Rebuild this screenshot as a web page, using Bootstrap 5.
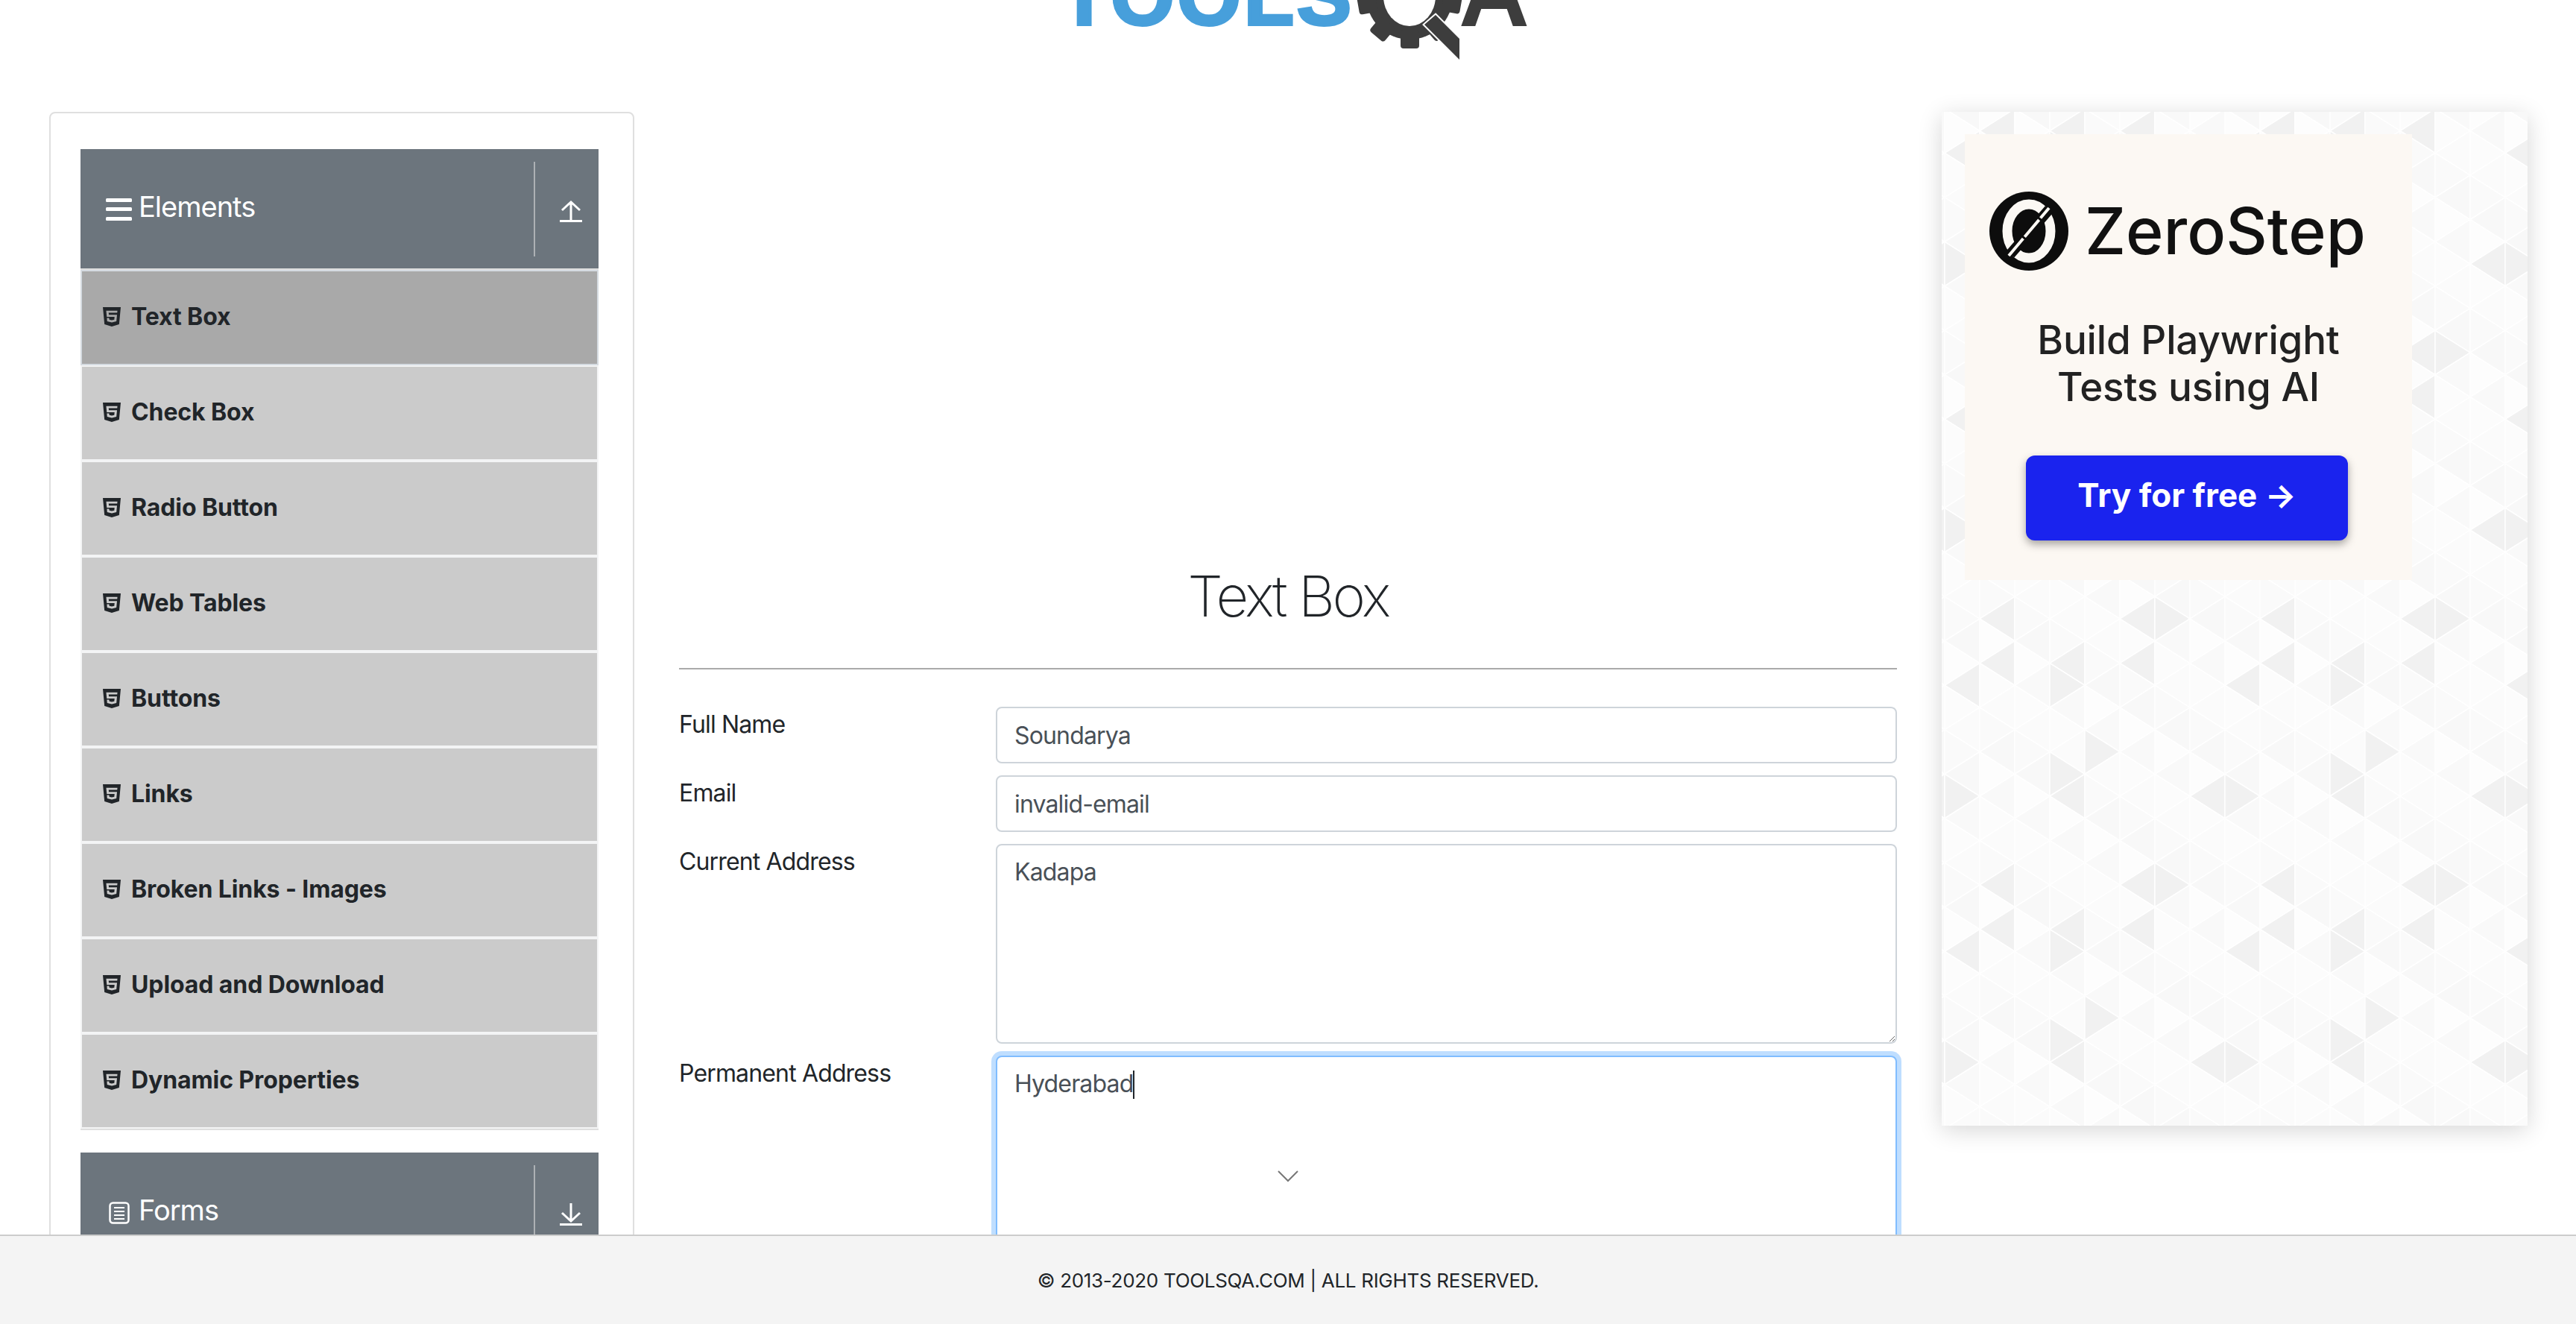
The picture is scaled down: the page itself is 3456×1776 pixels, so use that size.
<!DOCTYPE html>
<html lang="en">
<head>
  <meta charset="UTF-8">
  <title>ToolsQA</title>
  <link href="https://cdn.jsdelivr.net/npm/bootstrap@5.3.0/dist/css/bootstrap.min.css" rel="stylesheet">
  <style>
    body {
      font-family: Inter, "Liberation Sans", sans-serif;
      color: #212529;
      overflow: hidden;
      height: 1776px;
    }
    .logo-bar { height: 150px; }
    .page-wrap { padding: 0 65px 0 66px; gap: 60px; }

    /* sidebar */
    .side-col { width: 785px; flex: none; }
    .side-card { border: 2px solid #dfdfdf; border-radius: 8px; padding: 48px 46px 0 40px; }
    .group-head { height: 160px; font-size: 38px; letter-spacing: -1px; }
    .head-label { padding-left: 34px; gap: 9px; margin-top: -6px; }
    .head-label.forms-label { gap: 12px; }
    .head-sep { width: 2px; height: 127px; background: #adb1b5; }
    .head-arrow { width: 85px; padding: 8px 0 0 11px; }
    .menu-list { border-radius: 0; margin-bottom: 30px; }
    .menu-list .list-group-item {
      height: 128px;
      border: 2px solid #f3f4f5;
      border-radius: 0;
      background: #cbcbcb;
      color: #212529;
      font-size: 32px;
      font-weight: 700;
      letter-spacing: -.1px;
      padding: 0 0 3px 28px;
      gap: 14px;
    }
    .menu-list .list-group-item.active { background: #a9a9a9; border-color: #d5dbe1; }

    /* form */
    .main-col { min-width: 0; }
    .page-title {
      font-size: 76px;
      font-weight: 200;
      line-height: 1.2;
      letter-spacing: -3.4px;
      margin: 0;
      padding-top: 604px;
    }
    .title-rule { border: 0; border-top: 2px solid #aaa; opacity: 1; margin: 51px 0 50px; }
    .field-label { width: 425px; flex: none; font-size: 32px; line-height: 48px; letter-spacing: -.85px; margin: 0; }
    .field-box {
      height: 76px;
      font-size: 32px;
      line-height: 48px;
      letter-spacing: -.85px;
      color: #495057;
      border: 2px solid #ced4da;
      border-radius: 8px;
      padding: 12px 23px;
    }
    .field-box.tall { height: 268px; }
    .field-box.focused { border-color: #80bdff; box-shadow: 0 0 0 6px rgba(0, 123, 255, .25); }
    .type-caret { display: inline-block; width: 2px; height: 38px; background: #212529; vertical-align: -9px; }
    .scroll-chevron { top: 1420px; left: 50%; margin-left: -14px; }

    /* ad */
    .ad-col { width: 786px; height: 1360px; flex: none; background: #fafafa; background-position: 51px -34px; box-shadow: 0 6px 30px rgba(0, 0, 0, .16); padding: 30px 0 0 31px; }
    .ad-panel { width: 600px; height: 598px; background: #fcf8f3; padding-top: 77px; }
    .ad-brand { gap: 22px; padding-left: 33px; height: 106px; font-size: 86px; font-weight: 500; color: #111; }
    .ad-copy { font-size: 53px; line-height: 63px; font-weight: 500; color: #222; letter-spacing: -.2px; margin: 62px 0 0; }
    .try-btn {
      display: block;
      width: 432px;
      height: 114px;
      margin: 60px auto 0;
      padding: 0 0 8px;
      font-size: 44px;
      font-weight: 700;
      border: 0;
      border-radius: 12px;
      background: #1a23ee;
      box-shadow: 0 5px 12px rgba(0, 0, 0, .35);
      transform: translateX(-2px);
    }

    .site-footer { height: 120px; background: #f4f4f4; border-top: 2px solid #ccc; font-size: 26px; letter-spacing: -.3px; color: #212529; }
  </style>
</head>
<body>
  <svg width="0" height="0" class="d-block">
    <defs>
      <symbol id="html5" viewBox="0 32 384 448" preserveAspectRatio="none">
        <path fill="#212529" d="M0 32l34.9 395.8L191.5 480l157.6-52.2L384 32H0zm308.2 127.9H124.4l4.1 49.4h175.6l-13.6 148.4-97.9 27v.3h-1.1l-98.7-27.3-6-75.8h47.7L138 320l53.5 14.5 53.7-14.5 6-62.2H84.3L71.5 112.2h241.1l-4.4 47.7z"/>
      </symbol>
      <symbol id="arrowUp" viewBox="0 0 30 32">
        <path d="M15 28V3M3 14L15 3l12 11" fill="none" stroke="#fff" stroke-width="3"/>
        <rect y="27" width="30" height="3" fill="#fff"/>
      </symbol>
      <symbol id="arrowDown" viewBox="0 0 30 32">
        <path d="M15 0V24M3 13l12 11 12-11" fill="none" stroke="#fff" stroke-width="3"/>
        <rect y="27" width="30" height="3" fill="#fff"/>
      </symbol>
    </defs>
  </svg>

  <header class="logo-bar d-flex justify-content-center">
    <svg width="660" height="90" viewBox="1398 0 660 90">
      <text x="1421" y="33" font-family="Liberation Sans" font-weight="700" font-size="110" fill="#479fdb" stroke="#479fdb" stroke-width="4" textLength="392" lengthAdjust="spacing">TOOLS</text>
      <g fill="#3d3d3d">
        <text x="1957" y="35" font-family="Liberation Sans" font-weight="700" font-size="130" textLength="95" lengthAdjust="spacingAndGlyphs">A</text>
        <circle cx="1891" cy="-5" r="58"/>
        <rect x="1879" y="40" width="25" height="25" rx="4" transform="rotate(0 1891 -5)"/>
        <rect x="1879" y="40" width="25" height="25" rx="4" transform="rotate(40 1891 -5)"/>
        <rect x="1879" y="40" width="25" height="25" rx="4" transform="rotate(80 1891 -5)"/>
        <rect x="1879" y="40" width="25" height="25" rx="4" transform="rotate(-40 1891 -5)"/>
        <rect x="1879" y="40" width="25" height="25" rx="4" transform="rotate(-80 1891 -5)"/>
      </g>
      <ellipse cx="1891" cy="-5" rx="35" ry="40" fill="#fff"/>
      <polygon points="1926,20 1958,52 1958,80 1911,33" fill="#3d3d3d" stroke="#fff" stroke-width="4" paint-order="stroke"/>
    </svg>
  </header>

  <div class="page-wrap d-flex align-items-start">
    <aside class="side-col">
      <div class="card side-card">
        <div class="group-head bg-secondary text-white d-flex align-items-center">
          <div class="head-label flex-fill d-flex align-items-center">
            <svg width="35" height="30" viewBox="0 0 35 30" class="mt-2"><g fill="#fff"><rect width="35" height="5" rx="1.5"/><rect y="12" width="35" height="5" rx="1.5"/><rect y="25" width="35" height="5" rx="1.5"/></g></svg>
            <span>Elements</span>
          </div>
          <div class="head-sep"></div>
          <div class="head-arrow d-flex justify-content-center"><svg width="30" height="32"><use href="#arrowUp"/></svg></div>
        </div>
        <div class="list-group menu-list" id="menuList"></div>

        <div class="group-head bg-secondary text-white d-flex align-items-center">
          <div class="head-label forms-label flex-fill d-flex align-items-center">
            <svg width="28" height="30" viewBox="0 0 28 30" class="mt-2 ms-1"><rect x="1.5" y="1.5" width="25" height="27" rx="4" fill="none" stroke="#fff" stroke-width="2.5"/><path d="M7 8h14M7 13h14M7 18h14M7 23h14" stroke="#fff" stroke-width="2"/></svg>
            <span>Forms</span>
          </div>
          <div class="head-sep"></div>
          <div class="head-arrow d-flex justify-content-center"><svg width="30" height="32"><use href="#arrowDown"/></svg></div>
        </div>
      </div>
    </aside>

    <main class="main-col flex-fill position-relative">
      <h1 class="page-title text-center">Text Box</h1>
      <hr class="title-rule">
      <form>
        <div class="d-flex mb-3">
          <label class="field-label" for="fullName">Full Name</label>
          <input class="form-control field-box" id="fullName" type="text" value="Soundarya">
        </div>
        <div class="d-flex mb-3">
          <label class="field-label" for="email">Email</label>
          <input class="form-control field-box" id="email" type="text" value="invalid-email">
        </div>
        <div class="d-flex mb-3">
          <label class="field-label" for="currentAddress">Current Address</label>
          <textarea class="form-control field-box tall" id="currentAddress">Kadapa</textarea>
        </div>
        <div class="d-flex mb-3">
          <label class="field-label">Permanent Address</label>
          <div class="form-control field-box tall focused">Hyderabad<span class="type-caret"></span></div>
        </div>
      </form>
      <svg class="scroll-chevron position-absolute" width="28" height="16" viewBox="0 0 28 16"><path d="M1 1l13 13L27 1" fill="none" stroke="#777" stroke-width="2"/></svg>
    </main>

    <aside class="ad-col" id="adBox">
      <div class="ad-panel text-center">
        <div class="ad-brand d-flex align-items-center">
          <svg width="106" height="106" viewBox="0 0 106 106">
            <circle cx="53" cy="53" r="53" fill="#0d0d0d"/>
            <ellipse cx="53" cy="53" rx="29" ry="36" fill="none" stroke="#fbf8f4" stroke-width="13"/>
            <path d="M28 84L80 24" stroke="#0d0d0d" stroke-width="14"/>
            <path d="M26 86L80 22" stroke="#fbf8f4" stroke-width="4" stroke-dasharray="30 3"/>
          </svg>
          <span>ZeroStep</span>
        </div>
        <p class="ad-copy">Build Playwright<br>Tests using AI</p>
        <a href="#" class="btn btn-primary try-btn d-flex align-items-center justify-content-center">Try for free →</a>
      </div>
    </aside>
  </div>

  <footer class="site-footer fixed-bottom d-flex align-items-center justify-content-center">
    <span>© 2013-2020 TOOLSQA.COM | ALL RIGHTS RESERVED.</span>
  </footer>

  <script>
    const menuItems = ["Text Box", "Check Box", "Radio Button", "Web Tables", "Buttons", "Links", "Broken Links - Images", "Upload and Download", "Dynamic Properties"];
    const menuList = document.getElementById("menuList");

    menuList.innerHTML = menuItems.map((name, i) => `
      <a href="#" class="list-group-item d-flex align-items-center ${i === 0 ? "active" : ""}">
        <svg width="24" height="26"><use href="#html5"/></svg>
        <span>${name}</span>
      </a>`).join("");

    // triangle tile for the ad background: 8 columns, 12 half rows
    const colW = 47, halfH = 29.75;
    const dark = ["0,0,L", "4,0,L", "5,0,R", "0,2,L", "2,2,L", "4,2,L", "2,3,R", "7,3,L", "3,6,R", "2,7,R", "2,8,L", "6,8,L", "7,8,R"];
    const shades = ["#f8f8f8", "#fafafa", "#fbfbfb", "#fcfcfc", "#f9f9f9", "#fdfdfd"];
    let tris = "";
    for (let c = -1; c < 9; c++) {
      for (let r = -2; r < 14; r++) {
        const x0 = c * colW, x1 = x0 + colW, y = r * halfH;
        const cc = (c + 8) % 8, rr = (r + 12) % 12;
        const shade = shades[(cc * 7 + rr * 5) % shades.length];
        // lattice points sit where column + half row is even
        if ((c + r + 16) % 2 === 0) {
          const fill = dark.includes(`${cc},${rr},L`) ? "#f1f1f1" : shade;
          tris += `<polygon points="${x0},${y} ${x1},${y - halfH} ${x1},${y + halfH}" fill="${fill}"/>`;
        } else {
          const fill = dark.includes(`${cc},${rr},R`) ? "#f1f1f1" : shade;
          tris += `<polygon points="${x0},${y - halfH} ${x0},${y + halfH} ${x1},${y}" fill="${fill}"/>`;
        }
      }
    }
    const tile = `<svg xmlns="http://www.w3.org/2000/svg" width="${colW * 8}" height="${halfH * 12}"><g stroke="#fff" stroke-width="1.5">${tris}</g></svg>`;
    document.getElementById("adBox").style.backgroundImage = `url("data:image/svg+xml,${encodeURIComponent(tile)}")`;
  </script>
  <script src="https://cdn.jsdelivr.net/npm/bootstrap@5.3.0/dist/js/bootstrap.bundle.min.js"></script>
</body>
</html>
